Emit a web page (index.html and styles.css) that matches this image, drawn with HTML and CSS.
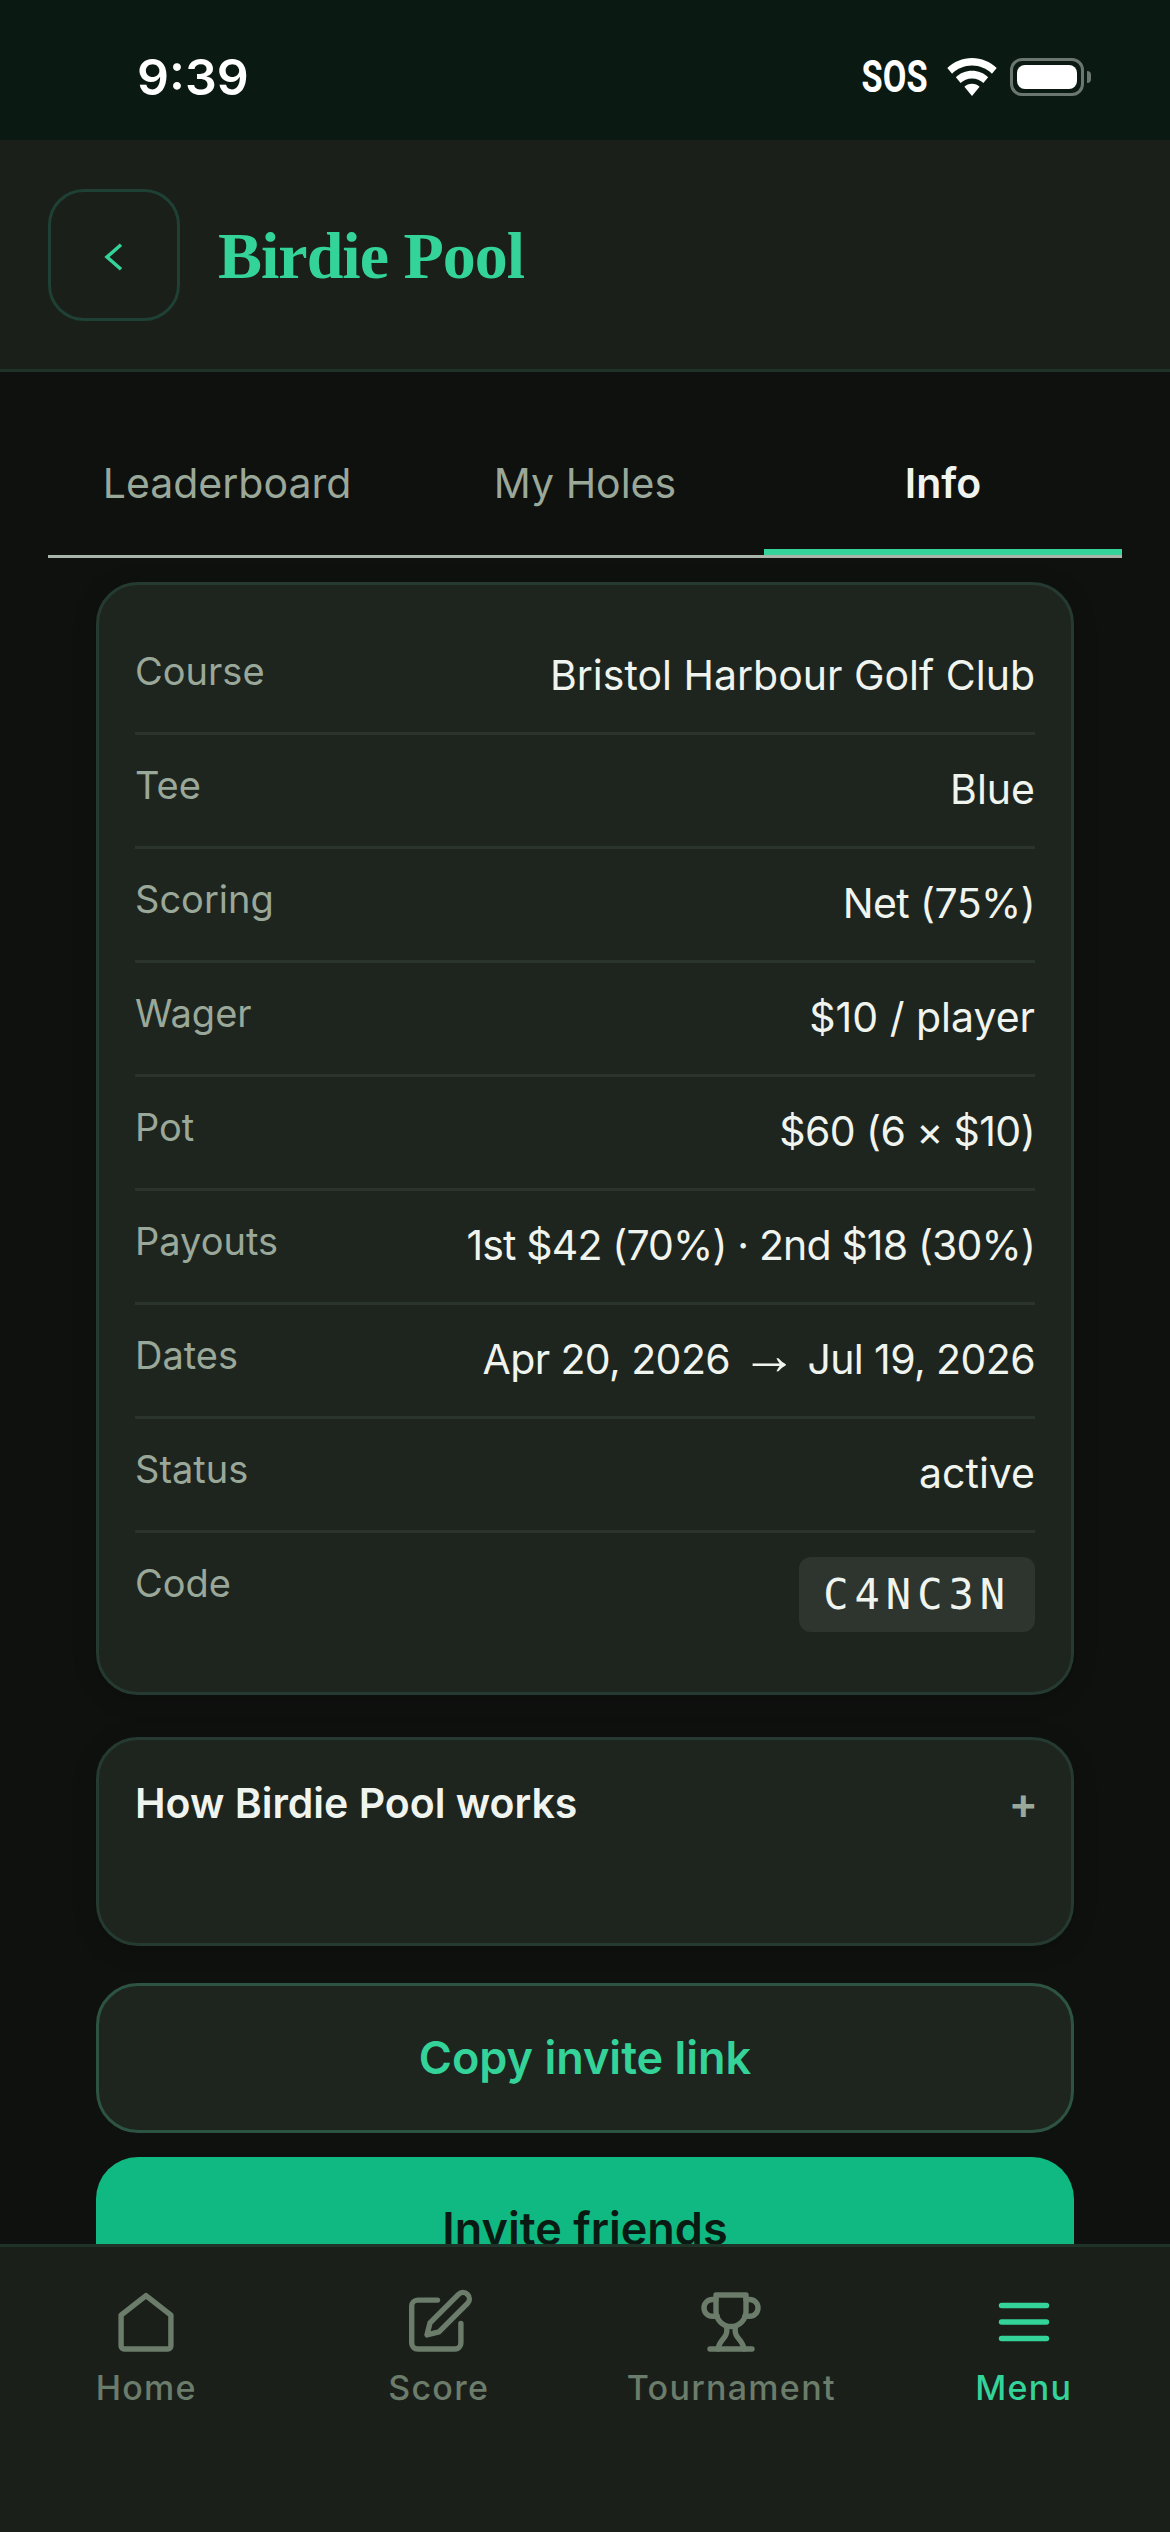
FILE: index.html
```html
<!DOCTYPE html>
<html lang="en">
<head>
  <meta charset="UTF-8" />
  <meta name="viewport" content="width=device-width, initial-scale=1.0" />
  <title>Birdie Pool</title>
  <link rel="stylesheet" href="styles.css">
</head>
<body>

<div class="app">
  <div class="status-bar">
    <span class="clock">9:39</span>
    <div class="status-icons">
      <span class="sos">SOS</span>
      <svg class="wifi" viewBox="0 0 52 40" fill="#fff">
        <path d="M26 0C16 0 7 4 0 10.500l5 6C10.500 11.300 18 8 26 8s15.500 3.300 21 8.500l5-6C45 4 36 0 26 0z"/>
        <path d="M26 13.500c-6.500 0-12.500 2.500-17 6.800l5 6c3-3 7.300-4.800 12-4.800s9 1.800 12 4.800l5-6c-4.500-4.300-10.500-6.800-17-6.800z"/>
        <path d="M26 27c-3.200 0-6 1.200-8 3.200L26 40l8-9.800c-2-2-4.800-3.200-8-3.200z"/>
      </svg>
      <div class="battery"><div class="battery-fill"></div></div>
      <div class="battery-nub"></div>
    </div>
  </div>

  <header class="top-bar">
    <button class="back-btn" type="button">
      <svg viewBox="0 0 24 24" fill="none" stroke="#34d399" stroke-width="2"><path d="M16 5l-8 7 8 7"/></svg>
    </button>
    <h1>Birdie Pool</h1>
  </header>

  <main class="content">
    <div class="tabs">
      <div class="tab">Leaderboard</div>
      <div class="tab">My Holes</div>
      <div class="tab active">Info</div>
    </div>

    <div class="stack">
      <section class="card info-card">
        <div class="row"><span class="row-label">Course</span><span class="row-value">Bristol Harbour Golf Club</span></div>
        <div class="row"><span class="row-label">Tee</span><span class="row-value">Blue</span></div>
        <div class="row"><span class="row-label">Scoring</span><span class="row-value tight">Net (75%)</span></div>
        <div class="row"><span class="row-label">Wager</span><span class="row-value">$10 / player</span></div>
        <div class="row"><span class="row-label">Pot</span><span class="row-value tight">$60 (6 × $10)</span></div>
        <div class="row"><span class="row-label">Payouts</span><span class="row-value tighter">1st $42 (70%) · 2nd $18 (30%)</span></div>
        <div class="row"><span class="row-label">Dates</span><span class="row-value tight">Apr 20, 2026 <span class="arrow">→</span> Jul 19, 2026</span></div>
        <div class="row"><span class="row-label">Status</span><span class="row-value">active</span></div>
        <div class="row row-last"><span class="row-label">Code</span><span class="code">C4NC3N</span></div>
      </section>

      <section class="card how-card">
        <span class="how-title">How Birdie Pool works</span>
        <span class="how-plus">+</span>
      </section>

      <button class="btn btn-copy" type="button">Copy invite link</button>
      <button class="btn btn-invite" type="button">Invite friends</button>
    </div>
  </main>

  <nav class="tab-bar">
    <div class="nav-item">
      <svg viewBox="0 0 24 24"><path d="M12 3.200l8.300 6.500V20a1 1 0 0 1-1 1H4.700a1 1 0 0 1-1-1V9.700z"/></svg>
      <span>Home</span>
    </div>
    <div class="nav-item">
      <svg viewBox="0 0 24 24"><path d="M11.500 4.700H4.900a2 2 0 0 0-2 2V19a2 2 0 0 0 2 2h12.400a2 2 0 0 0 2-2v-6.500"/><path d="M18.500 2.800a2.121 2.121 0 0 1 3 3L12 15.300l-4 1 1-4z"/></svg>
      <span>Score</span>
    </div>
    <div class="nav-item">
      <svg viewBox="0 0 24 24"><path d="M7 3h10v5.500a5 5 0 0 1-10 0z"/><path d="M7 4.500H5.800a2.800 2.800 0 0 0 0 5.600H7.400"/><path d="M17 4.500h1.200a2.800 2.800 0 0 1 0 5.600H16.600"/><path d="M10.600 13.500v1.500c0 2.500-2.600 3-2.900 6"/><path d="M13.400 13.500v1.500c0 2.500 2.600 3 2.900 6"/><path d="M5 21h14"/></svg>
      <span>Tournament</span>
    </div>
    <div class="nav-item active">
      <svg viewBox="0 0 24 24"><path d="M4.500 6.500h15"/><path d="M4.500 12h15"/><path d="M4.500 17.500h15"/></svg>
      <span>Menu</span>
    </div>
  </nav>
</div>

</body>
</html>
```

FILE: styles.css
```css
* {
  box-sizing: border-box;
}
html, body {
  margin: 0;
  padding: 0;
  height: 100%;
  background: #0f110f;
  font-family: 'Inter', 'Noto Sans', sans-serif;
  overflow: hidden;
}
.app {
  display: flex;
  flex-direction: column;
  height: 2532px;
  overflow: hidden;
}

/* status bar */
.status-bar {
  display: flex;
  justify-content: space-between;
  align-items: center;
  height: 140px;
  flex-shrink: 0;
  padding: 14px 79px 0 137px;
  background: #0a1a12;
  color: #fff;
}
.clock {
  font-size: 50px;
  font-weight: 600;
}
.status-icons {
  display: flex;
  align-items: center;
}
.sos {
  font-family: 'Roboto', sans-serif;
  font-size: 44px;
  font-weight: 700;
  margin-right: 18px;
  transform: scaleX(0.78);
  transform-origin: right center;
}
.wifi {
  width: 52px;
  height: 38px;
  margin-right: 12px;
}
.battery {
  width: 74px;
  height: 38px;
  padding: 4px;
  border: 3px solid #6b7670;
  border-radius: 12px;
}
.battery-fill {
  height: 100%;
  background: #fff;
  border-radius: 8px;
}
.battery-nub {
  width: 4px;
  height: 12px;
  margin-left: 3px;
  background: #6b7670;
  border-radius: 0 4px 4px 0;
}

/* header */
.top-bar {
  display: flex;
  align-items: center;
  gap: 38px;
  height: 232px;
  flex-shrink: 0;
  padding: 0 48px;
  background: #1a1f1a;
  border-bottom: 3px solid #1f3329;
}
.back-btn {
  display: flex;
  align-items: center;
  justify-content: center;
  width: 132px;
  height: 132px;
  padding: 5px 0 0;
  background: none;
  border: 3px solid #1f4034;
  border-radius: 36px;
}
.back-btn svg {
  width: 42px;
  height: 42px;
}
.top-bar h1 {
  margin: 0;
  padding-top: 2px;
  font-family: 'Liberation Serif', serif;
  font-size: 66px;
  font-weight: 700;
  letter-spacing: -1px;
  color: #34d399;
}

/* tabs */
.content {
  flex: 1;
  min-height: 0;
  overflow: hidden;
}
.tabs {
  display: flex;
  margin: 0 48px;
  border-bottom: 3px solid #a8b5a8;
}
.tab {
  flex: 1;
  height: 183px;
  padding-top: 85px;
  text-align: center;
  font-size: 41px;
  line-height: 52px;
  color: #9aa89a;
}
.tab.active {
  color: #f0f4ef;
  font-weight: 600;
  border-bottom: 6px solid #34d399;
}

/* cards */
.stack {
  display: flex;
  flex-direction: column;
  gap: 42px;
  margin: 24px 96px 0;
}
.card {
  background: #1e251f;
  border: 3px solid #253a30;
  border-radius: 42px;
  box-shadow: 0 4px 24px rgba(0,0,0,0.18);
}
.info-card {
  height: 1113px;
  padding: 36px 36px 0;
}
.row {
  display: flex;
  justify-content: space-between;
  align-items: flex-start;
  height: 114px;
  padding-top: 26px;
  border-bottom: 3px solid #2a332c;
}
.row-last {
  border-bottom: none;
}
.row-label {
  font-size: 38px;
  line-height: 48px;
  color: #9aa89a;
}
.row-value {
  font-size: 41px;
  line-height: 56px;
  color: #f0f4ef;
}
.tight {
  letter-spacing: -0.6px;
}
.tighter {
  letter-spacing: -0.85px;
}
.arrow {
  font-family: 'Liberation Sans', sans-serif;
  font-size: 56px;
  line-height: 0;
}
.code {
  margin-top: -2px;
  padding: 0 24px;
  height: 75px;
  line-height: 75px;
  background: #2e352f;
  border-radius: 12px;
  font-family: 'DejaVu Sans Mono', 'Liberation Mono', monospace;
  font-size: 42px;
  letter-spacing: 6px;
  color: #f0f4ef;
}
.how-card {
  display: flex;
  justify-content: space-between;
  align-items: flex-start;
  height: 209px;
  padding: 38px 36px 0;
}
.how-title {
  font-size: 41px;
  line-height: 50px;
  font-weight: 600;
  color: #f0f4ef;
}
.how-plus {
  margin-right: -3px;
  font-size: 44px;
  line-height: 50px;
  font-weight: 600;
  color: #9aa89a;
}
.btn {
  width: 100%;
  height: 150px;
  font-family: inherit;
  font-size: 45px;
  font-weight: 600;
  border-radius: 42px;
}
.btn-copy {
  margin-top: -5px;
  padding-bottom: 3px;
  background: #1e251f;
  border: 3px solid #2d5443;
  color: #34d399;
}
.btn-invite {
  flex-shrink: 0;
  margin-top: -18px;
  padding-bottom: 8px;
  background: #10b981;
  border: none;
  color: #0a1a12;
}

/* bottom nav */
.tab-bar {
  display: flex;
  height: 288px;
  flex-shrink: 0;
  padding-top: 39px;
  background: #1a1f1a;
  border-top: 3px solid #1f3329;
}
.nav-item {
  flex: 1;
  display: flex;
  flex-direction: column;
  align-items: center;
  font-size: 34px;
  line-height: 44px;
  font-weight: 550;
  letter-spacing: 1.3px;
  color: #6b7c6b;
}
.nav-item svg {
  width: 72px;
  height: 72px;
  margin-bottom: 8px;
  fill: none;
  stroke: #6b7c6b;
  stroke-width: 1.8;
  stroke-linecap: round;
  stroke-linejoin: round;
}
.nav-item.active {
  color: #34d399;
}
.nav-item.active svg {
  stroke: #34d399;
}
```
